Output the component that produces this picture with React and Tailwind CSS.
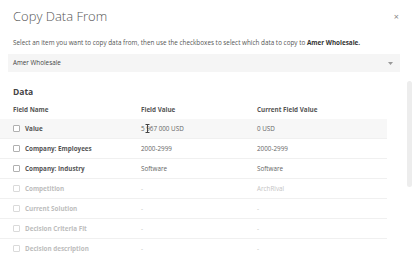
const rows = [
  { name: "Value", value: "5 967 000 USD", current: "0 USD", active: true },
  { name: "Company: Employees", value: "2000-2999", current: "2000-2999", enabled: true },
  { name: "Company: Industry", value: "Software", current: "Software", enabled: true },
  { name: "Competition", value: "-", current: "ArchRival" },
  { name: "Current Solution", value: "-", current: "-" },
  { name: "Decision Criteria Fit", value: "-", current: "-" },
  { name: "Decision description", value: "-", current: "-" },
];

const Row = ({ row }) => {
  const on = row.active || row.enabled;
  return (
    <div
      className={`relative flex h-[20px] items-center border-b border-[#f0f0f0] ${
        row.active ? "bg-[#f7f7f7]" : ""
      }`}
    >
      <div className="flex w-[141px] items-center pl-[13px]">
        <span
          className={`mr-[5px] h-[7px] w-[7px] rounded-[1px] border ${
            on ? "border-[#b0b0b0]" : "border-[#dadada]"
          } bg-white`}
        />
        <span className={`text-[6.3px] font-bold ${on ? "text-[#555]" : "text-[#bdbdbd]"}`}>
          {row.name}
        </span>
      </div>
      <div className={`w-[116px] text-[6.3px] ${on ? "text-[#666]" : "text-[#c4c4c4]"}`}>
        {row.value}
      </div>
      <div className={`text-[6.3px] ${on ? "text-[#666]" : "text-[#c4c4c4]"}`}>
        {row.current}
      </div>
      {row.active && (
        <svg
          className="absolute left-[145px] top-[5px]"
          width="5"
          height="9"
          viewBox="0 0 5 9"
        >
          <path d="M0.5 0.5h4M2.5 0.5v8M0.5 8.5h4" stroke="#444" strokeWidth="1" fill="none" />
        </svg>
      )}
    </div>
  );
};

export default function App() {
  return (
    <div className="h-[257px] w-[414px] overflow-hidden bg-white font-['Open_Sans',sans-serif] text-[#444]">
      <div className="flex items-center justify-between pl-[13px] pr-[15px] pt-[7px]">
        <h1 className="text-[13px] font-light text-[#555]">Copy Data From</h1>
        <span className="text-[9px] text-[#888]">×</span>
      </div>
      <p className="mt-[11px] pl-[13px] text-[6.35px] text-[#555]">
        Select an item you want to copy data from, then use the checkboxes to select which data
        to copy to <span className="font-bold text-[#333]">Amer Wholesale.</span>
      </p>
      <div className="ml-[8px] mr-[14px] mt-[7px] flex h-[18px] items-center justify-between bg-[#f5f5f5] pl-[5px] pr-[7px]">
        <span className="text-[6.3px] text-[#444]">Amer Wholesale</span>
        <svg width="5" height="3" viewBox="0 0 5 3">
          <path d="M0 0h5L2.5 3z" fill="#999" />
        </svg>
      </div>
      <div className="flex">
        <div className="w-[387px] pt-[14px]">
          <h2 className="pl-[13px] text-[8.5px] font-bold text-[#444]">Data</h2>
          <div className="mt-[2px] flex h-[18px] items-center text-[6.3px] font-bold text-[#555]">
            <div className="w-[141px] pl-[13px]">Field Name</div>
            <div className="w-[116px]">Field Value</div>
            <div>Current Field Value</div>
          </div>
          {rows.map((row) => (
            <Row key={row.name} row={row} />
          ))}
        </div>
        <div className="ml-[20px] mt-[9px] h-[106px] w-[5px] rounded-full bg-[#ededed]" />
      </div>
    </div>
  );
}
